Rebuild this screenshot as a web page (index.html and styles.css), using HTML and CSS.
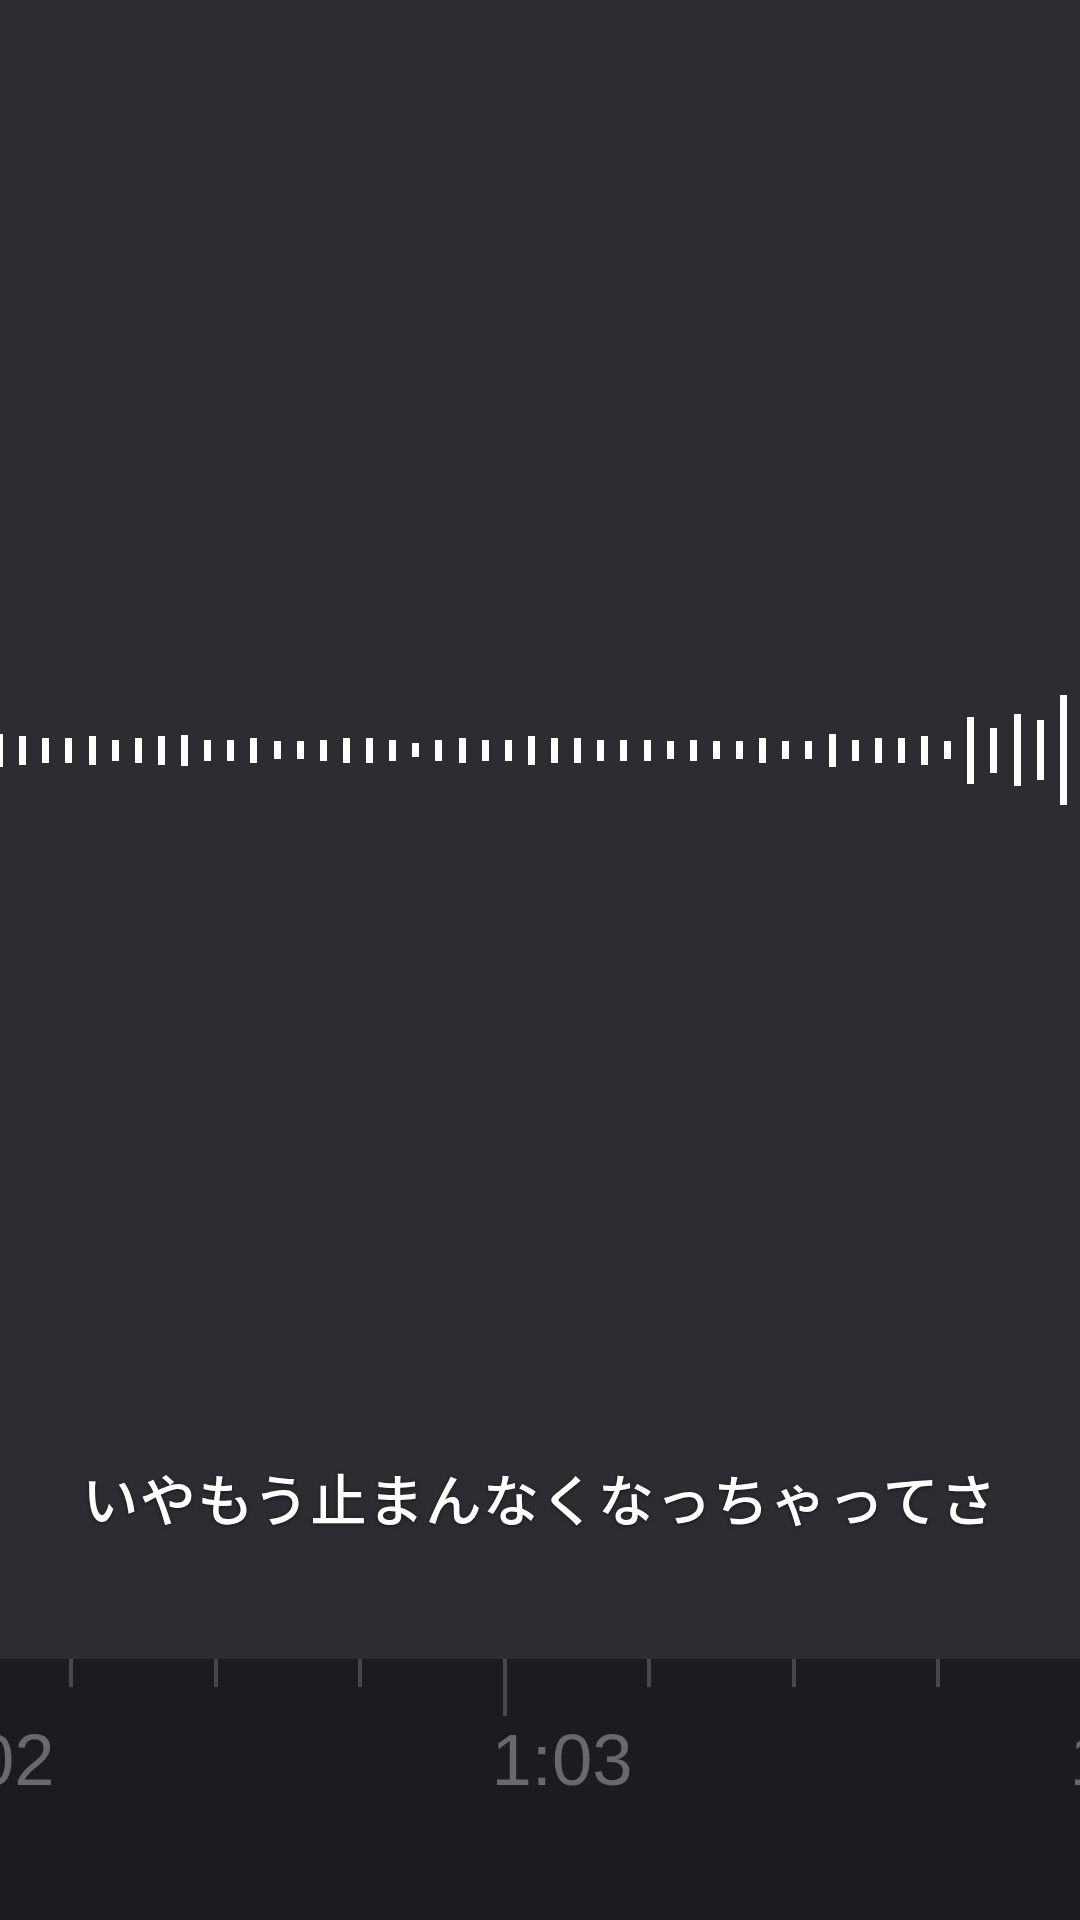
FILE: index.html
```html
<!DOCTYPE html>
<html lang="ja">
<head>
  <meta charset="UTF-8">
  <meta name="viewport" content="width=device-width, initial-scale=1.0">
  <title>ボイスメモ</title>
  <link rel="stylesheet" href="styles.css">
</head>
<body>
  <div class="stage">
    <div class="wave" id="wave"></div>
    <div class="caption">いやもう止まんなくなっちゃってさ</div>
  </div>

  <div class="ruler">
    <div class="cell major"><div class="tick"></div><div class="label">1:02</div></div>
    <div class="cell"><div class="tick"></div></div>
    <div class="cell"><div class="tick"></div></div>
    <div class="cell"><div class="tick"></div></div>
    <div class="cell major"><div class="tick"></div><div class="label">1:03</div></div>
    <div class="cell"><div class="tick"></div></div>
    <div class="cell"><div class="tick"></div></div>
    <div class="cell"><div class="tick"></div></div>
    <div class="cell major"><div class="tick"></div><div class="label">1:04</div></div>
  </div>

  <script>
    // 波形の高さ (px)
    const levels = [
      33, 29, 25, 25, 29, 21, 25, 29, 31, 21, 21, 25, 18, 18, 21, 25,
      25, 21, 14, 21, 25, 21, 21, 29, 25, 25, 21, 21, 21, 18, 21, 18,
      18, 25, 18, 18, 33, 21, 25, 25, 29, 18, 67, 45, 72, 60, 110
    ];
    const wave = document.getElementById('wave');
    levels.forEach(function(h) {
      const bar = document.createElement('div');
      bar.className = 'bar';
      bar.style.height = h + 'px';
      wave.appendChild(bar);
    });
  </script>
</body>
</html>
```

FILE: styles.css
```css
body {
  margin: 0;
  width: 1080px;
  height: 1920px;
  overflow: hidden;
  background-color: #1c1b20;
  font-family: "Liberation Sans", Arial, sans-serif;
}
.stage {
  height: 1659px;
  background-color: #2c2c31;
  display: flex;
  flex-direction: column;
  overflow: hidden;
}
.wave {
  display: flex;
  align-items: center;
  gap: 16.13px;
  height: 110px;
  margin-top: 695px;
  margin-left: -4px;
}
.bar {
  flex: none;
  width: 7px;
  background-color: #ffffff;
}
.caption {
  margin-top: 664px;
  text-align: center;
  color: #ffffff;
  font-family: "Noto Sans CJK JP", "Noto Sans", sans-serif;
  font-size: 56px;
  font-weight: 500;
  line-height: 1;
  letter-spacing: 1.5px;
  text-shadow: 0 1px 4px rgba(0, 0, 0, 0.45);
}
.ruler {
  display: flex;
  align-items: flex-start;
  margin-left: -75.5px;
}
.cell {
  flex: none;
  width: 144.5px;
}
.tick {
  width: 4px;
  height: 28px;
  background-color: #48484c;
}
.major .tick {
  height: 57px;
}
.label {
  margin-top: 8px;
  margin-left: -11px;
  white-space: nowrap;
  color: #69696d;
  font-size: 72.5px;
  line-height: 1;
}
```
